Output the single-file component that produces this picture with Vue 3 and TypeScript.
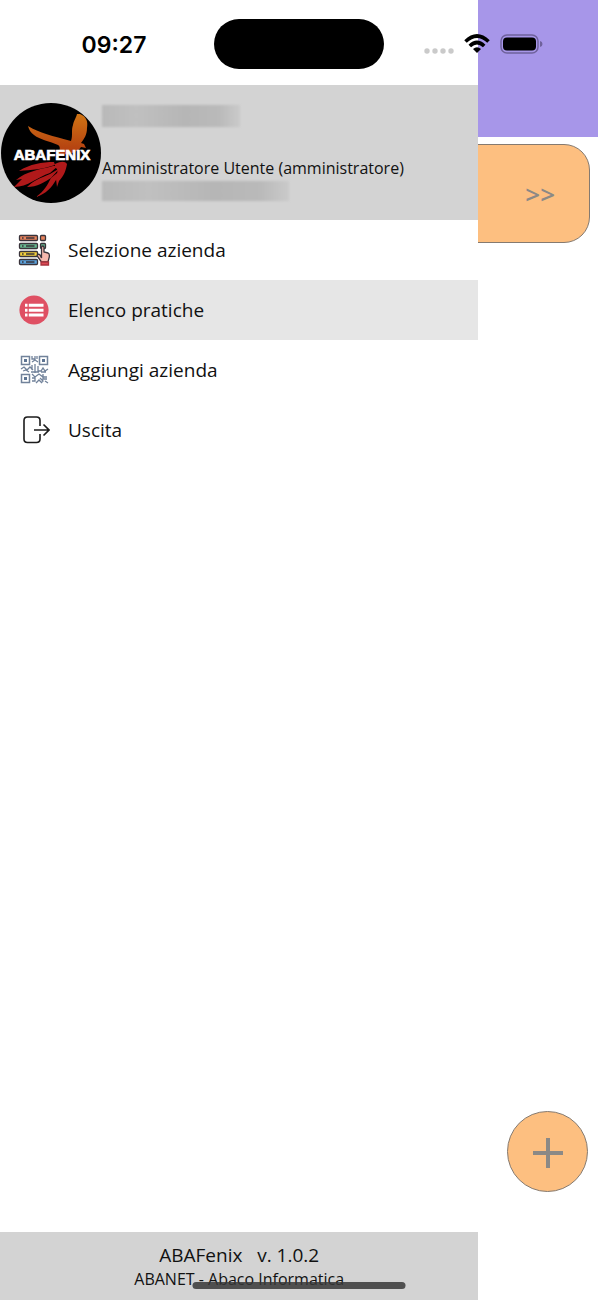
<script setup lang="ts">
import { ref } from 'vue'

interface MenuItem {
  id: 'select' | 'list' | 'qr' | 'exit'
  label: string
}

const items: MenuItem[] = [
  { id: 'select', label: 'Selezione azienda' },
  { id: 'list', label: 'Elenco pratiche' },
  { id: 'qr', label: 'Aggiungi azienda' },
  { id: 'exit', label: 'Uscita' },
]

const active = ref<MenuItem['id']>('list')

const servers = [
  { y: 1.5, color: '#e8835c' },
  { y: 9.5, color: '#66b88f' },
  { y: 17.5, color: '#f5d03c' },
  { y: 25.5, color: '#5aa2dc' },
]
</script>

<template>
  <div class="screen">
    <main class="page">
      <header class="page-header"></header>
      <section class="card">
        <button type="button" class="next">&gt;&gt;</button>
      </section>
    </main>

    <button type="button" class="fab" aria-label="Aggiungi">
      <svg viewBox="0 0 30 30" width="30" height="30">
        <path d="M0 15H30M15 0V30" stroke="#8b8986" stroke-width="4" />
      </svg>
    </button>

    <aside class="drawer">
      <header class="profile">
        <svg class="avatar" viewBox="0 0 102 102" role="img" aria-label="ABAFENIX">
          <defs>
            <linearGradient id="wing" x1="0" y1="0" x2="0" y2="1">
              <stop offset="0" stop-color="#d07414" />
              <stop offset="1" stop-color="#b03a10" />
            </linearGradient>
          </defs>
          <circle cx="51" cy="51" r="50" fill="#000" />
          <path
            d="M28 24C39 31 53 34 71 39C73 33 71 28 73 23C74 18 76 16 77 12L80 12C87 15 88 20 87 26C87 33 84 37 81 41L84 42L86 46L81 45C79 49 74 50 69 52L57 53C60 49 61 45 58 43C50 39 40 38 34 33C31 31 29 28 28 24Z"
            fill="url(#wing)"
          />
          <g fill="#b0191a">
            <path d="M54 60C42 60 30 62 19 69C31 68 44 67 55 63Z" />
            <path d="M53 64C38 68 27 69 16 78L22 77L14 85C28 85 37 75 50 71L58 64Z" />
            <path d="M50 72C40 76 33 79 27 85C37 85 45 80 51 76L60 66Z" />
            <path d="M51 76C47 84 44 89 36 95C46 92 52 85 56 78L62 67Z" />
            <path d="M55 62C61 59 65 59 67 62C66 68 64 74 59 79L57 85L56 77C57 71 59 68 55 65Z" />
          </g>
          <text class="logo-text" x="52" y="58" text-anchor="middle">ABAFENIX</text>
        </svg>
        <div class="identity">
          <div class="redacted name"></div>
          <div class="role">Amministratore Utente (amministratore)</div>
          <div class="redacted mail"></div>
        </div>
      </header>

      <nav class="menu">
        <button
          v-for="item in items"
          :key="item.id"
          type="button"
          class="item"
          :class="{ active: item.id === active }"
          @click="active = item.id"
        >
          <svg v-if="item.id === 'select'" class="icon" viewBox="0 0 32 32">
            <g stroke="#39333a" stroke-width="1.3">
              <template v-for="s in servers" :key="s.y">
                <rect x="1.5" :y="s.y" width="18" height="5" rx="1" :fill="s.color" />
                <path :d="`M4 ${s.y + 2.5}h1.6M8 ${s.y + 2.5}h8.5`" />
              </template>
              <rect x="22.5" y="1.5" width="5" height="5" rx="1" fill="#e8835c" />
              <rect x="22.5" y="9.5" width="5" height="5" rx="1" fill="#66b88f" />
              <path
                d="M23.5 24V13.5C23.500 11.500 26 11.500 26 13.500V18L30 19C31.500 19.300 31.500 21 31.300 23L30 28H23.500L19.500 22.500C18.500 20.500 20.500 19.500 22 21Z"
                fill="#f6b8ad"
              />
              <path d="M23 28H30.500V31H23Z" fill="#dc4b55" stroke="#a9333e" />
            </g>
          </svg>
          <svg v-else-if="item.id === 'list'" class="icon" viewBox="0 0 32 32">
            <circle cx="16" cy="16" r="14.6" fill="#df5063" />
            <path
              d="M7 11.3h2.500M10.800 11.300H25.500M7 16.200h2.500M10.800 16.200H25.500M7 21.100h2.500M10.800 21.100H25.500"
              stroke="#fff" stroke-width="3"
            />
          </svg>
          <svg v-else-if="item.id === 'qr'" class="icon" viewBox="0 0 32 32">
            <g fill="none" stroke="#71829a">
              <path d="M3.500 2.500h8v8h-8ZM21.500 2.500h8v8h-8ZM3.500 20.500h8v8h-8Z" stroke-width="1.5" />
              <path
                d="M14 2v3h3V2M19 2v3M14 8l3-2 3 2M14 11v5M3 15l3-2 3 3 3-3 3 3M5 17l3-1 3 2M17 10v9M13 18h8M20 12v5h3l2-3 2 3 3-2M23 18h5M14 20l3 3 4-3 4 3h4M14 24h3v3h-3M18 29l3-3 3 3M25 20v5h4M27 27l3 2M22 24l3 3-2 2"
                stroke-width="1.3"
              />
            </g>
            <path d="M6 5h3v3H6ZM24 5h3v3h-3ZM6 23h3v3H6Z" fill="#5d7492" />
          </svg>
          <svg v-else class="icon" viewBox="0 0 32 32" fill="none" stroke="#1c1c1c" stroke-width="1.6">
            <path d="M22 12V6.500Q22 3 18.500 3H9.500Q6 3 6 6.500V25Q6 28.500 9.500 28.500H18.500Q22 28.500 22 25V20" />
            <path d="M16 16H30.500M25.500 10.500L31 16L25.500 21.500" />
          </svg>
          <span>{{ item.label }}</span>
        </button>
      </nav>

      <footer class="about">
        <div class="version">ABAFenix&nbsp;&nbsp; v. 1.0.2</div>
        <div class="vendor">ABANET - Abaco Informatica</div>
      </footer>
    </aside>

    <div class="status">
      <time class="clock">09:27</time>
      <div class="island"></div>
      <div class="indicators">
        <svg class="dots" viewBox="0 0 30 6" width="30" height="6" fill="#cacaca">
          <circle v-for="n in 4" :key="n" :cx="n * 8 - 5" cy="3" r="2.7" />
        </svg>
        <svg class="wifi" viewBox="0 0 26 20" width="26" height="20" fill="none" stroke="#000" stroke-width="3.6">
          <path d="M1.5 7.5Q13-3.5 24.5 7.5" />
          <path d="M5.800 12Q13 5 20.200 12" />
          <path d="M9 15Q13 11.600 17 15L13 19Z" fill="#000" stroke="none" />
        </svg>
        <svg class="battery" viewBox="0 0 43 20" width="43" height="20">
          <rect x="1" y="1" width="37" height="18" rx="6" fill="none" stroke="#6f619c" stroke-width="1.5" />
          <rect x="3" y="3.5" width="33" height="13" rx="4" fill="#000" />
          <path d="M40 7Q42.500 7.500 42.500 10T40 13Z" fill="#6f619c" />
        </svg>
      </div>
    </div>

    <div class="home-bar"></div>
  </div>
</template>

<style>
body {
  margin: 0;
  background: #fff;
}
</style>

<style scoped>
.screen {
  position: relative;
  min-height: 100vh;
  overflow: hidden;
  background: #fff;
  color: #111;
  font-family: "Open Sans", "Noto Sans", sans-serif;
}

button {
  margin: 0;
  padding: 0;
  border: 0;
  background: none;
  color: inherit;
  font: inherit;
  cursor: pointer;
}

.page-header {
  height: 137px;
  background: #a796e9;
}

.card {
  display: flex;
  align-items: center;
  justify-content: flex-end;
  box-sizing: border-box;
  height: 99px;
  margin: 7px 8px 0;
  padding-right: 34px;
  border: 1px solid #857a70;
  border-radius: 26px;
  background: #fdbf80;
}

.next {
  color: #8b8986;
  font-size: 26px;
  font-weight: 600;
}

.fab {
  position: absolute;
  right: 10px;
  bottom: 108px;
  display: grid;
  place-items: center;
  box-sizing: border-box;
  width: 81px;
  height: 81px;
  padding-top: 3px;
  border: 1px solid #857a70;
  border-radius: 50%;
  background: #fdbf80;
}

.drawer {
  position: absolute;
  inset: 0 auto 0 0;
  display: flex;
  flex-direction: column;
  box-sizing: border-box;
  width: 80%;
  padding-top: 85px;
  background: #fff;
}

.profile {
  display: flex;
  align-items: center;
  height: 135px;
  background: #d3d3d3;
}

.avatar {
  flex: none;
  width: 102px;
  height: 102px;
}

.logo-text {
  fill: #fff;
  stroke: #fff;
  stroke-width: 0.7px;
  font: bold 15px "Liberation Sans", sans-serif;
}

.identity {
  display: flex;
  flex-direction: column;
  align-items: flex-start;
}

.redacted {
  background: linear-gradient(90deg, #b9b9b9, #c0c0c0 25%, #b6b6b6 60%, #bababa 85%, #cacaca);
  filter: blur(1px);
}

.name {
  width: 138px;
  height: 22px;
  margin-bottom: 28px;
}

.mail {
  width: 187px;
  height: 20px;
}

.role {
  font-size: 16px;
  line-height: 26px;
  white-space: nowrap;
}

.menu {
  flex: 1;
}

.item {
  display: flex;
  align-items: center;
  gap: 18px;
  width: 100%;
  height: 60px;
  padding-left: 18px;
  font-size: 19px;
  text-align: left;
}

.active {
  background: #e6e6e6;
}

.icon {
  flex: none;
  width: 32px;
  height: 32px;
}

.about {
  box-sizing: border-box;
  height: 68px;
  padding-top: 10px;
  background: #d3d3d3;
  text-align: center;
}

.version {
  font-size: 19px;
  line-height: 26px;
}

.vendor {
  font-size: 16px;
  line-height: 22px;
}

.status {
  position: absolute;
  inset: 0 0 auto;
  display: grid;
  grid-template-columns: 1fr 170px 1fr;
  align-items: center;
  height: 88px;
}

.clock {
  padding: 2px 0 0 14px;
  color: #000;
  font: 600 23px/28px Inter, sans-serif;
  text-align: center;
}

.island {
  height: 50px;
  border-radius: 25px;
  background: #000;
}

.indicators {
  display: flex;
  align-items: center;
  gap: 10px;
  padding-left: 40px;
}

.dots {
  margin-top: 13px;
}

.home-bar {
  position: absolute;
  bottom: 11px;
  left: 50%;
  width: 213px;
  height: 7px;
  border-radius: 4px;
  background: rgb(55 55 55 / 85%);
  transform: translateX(-50%);
}
</style>
